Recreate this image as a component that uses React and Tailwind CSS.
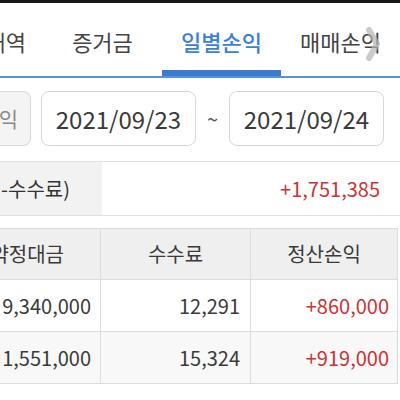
import { useState } from 'react';

const rows = [
  { amount: '9,340,000', fee: '12,291', pnl: '+860,000', bg: 'bg-white' },
  { amount: '1,551,000', fee: '15,324', pnl: '+919,000', bg: 'bg-[#f8f8f8]' },
];

export default function App() {
  const [tab] = useState('일별손익');
  const tabs = ['증거금', '일별손익', '매매손익'];

  return (
    <div className="w-[400px] h-[400px] bg-white overflow-hidden font-['Noto_Sans_CJK_KR','Noto_Sans',sans-serif]">
      <div className="h-[3px] bg-[#161616]" />

      {/* tabs */}
      <div className="relative flex h-[75px] border-b-[2px] border-[#5a92d8]">
        <div className="w-[43px] shrink-0 overflow-hidden flex flex-col">
          <div className="flex-1 flex items-center justify-end pt-[9px] pr-[17px] text-[22px] text-[#444] whitespace-nowrap">거래내역</div>
          <div className="h-[6px]" />
        </div>
        {tabs.map((t) => (
          <div key={t} className="w-[119px] shrink-0 flex flex-col">
            <div
              className={`flex-1 flex items-center justify-center pt-[9px] text-[22px] whitespace-nowrap ${
                t === tab ? 'text-[#3c7fd6] font-medium' : 'text-[#444]'
              }`}
            >
              {t}
            </div>
            <div className={`h-[6px] ${t === tab ? 'bg-[#3b7bd4]' : ''}`} />
          </div>
        ))}
        <svg className="absolute left-[364px] top-[23px] opacity-70" width="18" height="36" viewBox="0 0 18 36">
          <path d="M5 4 L13 18 L5 32" fill="none" stroke="#b5b5b5" strokeWidth="6" strokeLinecap="round" strokeLinejoin="round" />
        </svg>
      </div>

      {/* date range */}
      <div className="flex items-center h-[55px] mt-[13px]">
        <div className="w-[31px] h-full shrink-0 bg-[#f4f4f4] border border-[#d8d8d8] rounded-r-lg border-l-0 flex items-center justify-end pr-[12px] text-[21px] text-[#8a8a8a]">
          익
        </div>
        <div className="ml-[10px] w-[155px] h-full border border-[#d6d6d6] rounded-lg flex items-center justify-center text-[24px] text-[#3a3a3a]">
          2021/09/23
        </div>
        <div className="w-[33px] text-center text-[20px] text-[#555]">~</div>
        <div className="w-[155px] h-full border border-[#d6d6d6] rounded-lg flex items-center justify-center text-[24px] text-[#3a3a3a]">
          2021/09/24
        </div>
      </div>

      {/* summary */}
      <div className="flex h-[55px] mt-[15px] border-t border-b border-[#e0e0e0]">
        <div className="w-[102px] shrink-0 bg-[#f2f2f2] overflow-hidden flex items-center justify-end pr-[32px] text-[20px] text-[#333] whitespace-nowrap">
          (매매손익-수수료)
        </div>
        <div className="flex-1 flex items-center justify-end pr-[20px] text-[20px] text-[#cc3333]">+1,751,385</div>
      </div>

      {/* table */}
      <div className="mt-[12px] w-[398px] border-t border-[#dcdcdc] text-[20px]">
        <div className="flex h-[51px] bg-[#efefef] border-b border-[#dcdcdc] text-[#3a3a3a] text-[20px]">
          <div className="w-[101px] shrink-0 overflow-hidden flex items-center justify-end pr-[36px] border-r border-[#dcdcdc] whitespace-nowrap">계약정대금</div>
          <div className="w-[150px] shrink-0 flex items-center justify-center border-r border-[#dcdcdc]">수수료</div>
          <div className="flex-1 flex items-center justify-center border-r border-[#dcdcdc]">정산손익</div>
        </div>
        {rows.map((r) => (
          <div key={r.amount} className={`flex h-[52px] border-b border-[#dcdcdc] ${r.bg}`}>
            <div className="w-[101px] shrink-0 overflow-hidden flex items-center justify-end pr-[9px] border-r border-[#dcdcdc] text-[#3a3a3a] whitespace-nowrap">
              {r.amount}
            </div>
            <div className="w-[150px] shrink-0 flex items-center justify-end pr-[10px] border-r border-[#dcdcdc] text-[#3a3a3a]">
              {r.fee}
            </div>
            <div className="flex-1 flex items-center justify-end pr-[8px] border-r border-[#dcdcdc] text-[#cc3333]">{r.pnl}</div>
          </div>
        ))}
      </div>
    </div>
  );
}
